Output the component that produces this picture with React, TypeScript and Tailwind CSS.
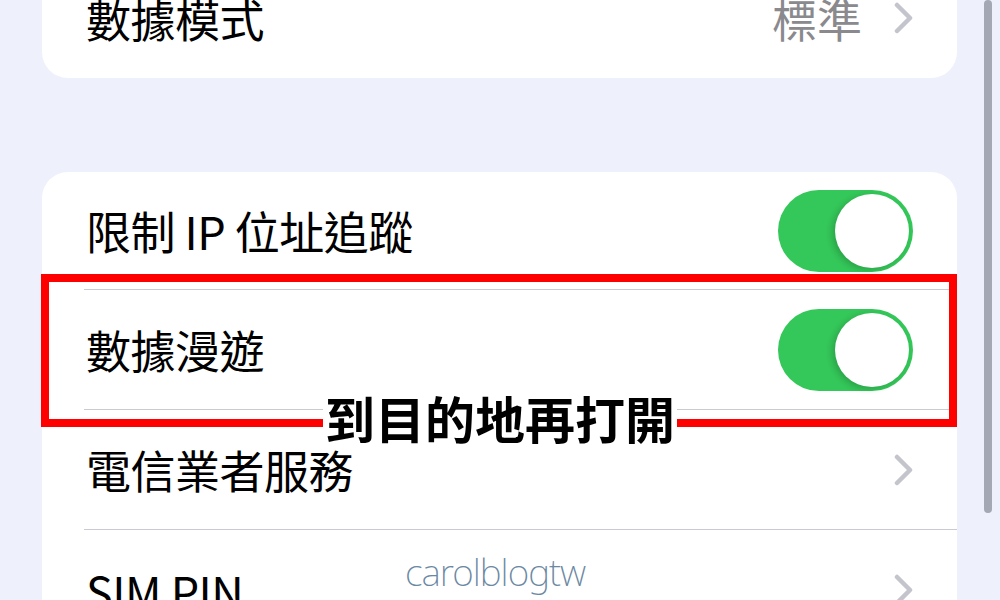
import React from "react";

const cjk = { fontFamily: '"Noto Sans CJK TC", "Noto Sans", sans-serif' };

function Chevron() {
  return (
    <svg width="19" height="32" viewBox="0 0 19 32" className="shrink-0">
      <polyline
        points="3,3 16,16 3,29"
        fill="none"
        stroke="#c4c4cc"
        strokeWidth="4.5"
        strokeLinecap="round"
        strokeLinejoin="round"
      />
    </svg>
  );
}

function Toggle() {
  return (
    <div className="w-[135px] h-[82px] rounded-full bg-[#34c759] flex items-center justify-end pr-[4px] shrink-0">
      <div className="w-[74px] h-[74px] rounded-full bg-white shadow-[-3px_2px_6px_rgba(0,0,0,0.18)]" />
    </div>
  );
}

function Row({
  label,
  right,
  last,
  h = "h-[120px]",
}: {
  label: string;
  right: React.ReactNode;
  last?: boolean;
  h?: string;
}) {
  return (
    <div className="pl-[42px]">
      <div className={`${h} flex items-center justify-between pr-[44px] ${last ? "" : "border-b border-[#c9cad2]"}`}>
        <span className="pl-[2px] text-[45px] leading-none text-black tracking-[-0.5px]" style={cjk}>
          {label}
        </span>
        {right}
      </div>
    </div>
  );
}

export default function App() {
  return (
    <div className="relative w-[1000px] h-[600px] overflow-hidden bg-[#eef0fc]" style={cjk}>
      <div className="px-[42px] pr-[43px] flex flex-col">
        {/* Card 1 */}
        <div className="mt-[-42px] bg-white rounded-[26px]">
          <Row
            label="數據模式"
            last
            right={
              <div className="flex items-center gap-[32px]">
                <span className="text-[45px] leading-none text-[#8a8a8e]">標準</span>
                <Chevron />
              </div>
            }
          />
        </div>

        {/* Card 2 */}
        <div className="mt-[94px] bg-white rounded-t-[26px] h-[520px]">
          <Row label="限制 IP 位址追蹤" h="h-[118px]" right={<Toggle />} />
          <Row label="數據漫遊" right={<Toggle />} />
          <Row label="電信業者服務" right={<Chevron />} />
          <Row label="SIM PIN" last right={<Chevron />} />
        </div>
      </div>

      {/* Red highlight box */}
      <div className="absolute left-[41px] top-[274px] w-[916px] h-[153px] border-[8px] border-[#ff0000]" />

      {/* Caption */}
      <div className="absolute left-[323px] top-[387px] w-[354px] h-[60px] bg-white flex items-center justify-center">
        <span className="text-[50px] font-bold leading-none text-black" style={cjk}>
          到目的地再打開
        </span>
      </div>

      {/* Watermark */}
      <div
        className="absolute left-[405px] top-[553px] text-[37px] font-extralight text-[#6b88a3] leading-none tracking-[-1px]"
        style={{ fontFamily: '"Noto Sans", sans-serif' }}
      >
        carolblogtw
      </div>

      {/* Scroll indicator */}
      <div className="absolute right-[8px] top-0 w-[8px] h-[513px] rounded-full bg-[#a4a7b4]" />
    </div>
  );
}
